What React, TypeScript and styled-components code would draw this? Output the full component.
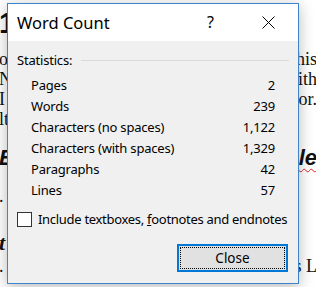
import styled, { createGlobalStyle } from 'styled-components';

const GlobalStyle = createGlobalStyle`
  html, body {
    margin: 0;
    padding: 0;
    background: #ffffff;
    overflow: hidden;
  }
  body {
    width: 316px;
    height: 287px;
  }
`;

type LineKind = 'heading' | 'body' | 'subheading' | 'italic' | 'spacer';

const docLines: { kind: LineKind; h: number; left?: string; right?: string; squiggle?: boolean }[] = [
  { kind: 'heading', h: 36, left: '1' },
  { kind: 'spacer', h: 8 },
  { kind: 'body', h: 20, left: 'ob', right: 'his' },
  { kind: 'body', h: 20, left: 'N', right: 'ith' },
  { kind: 'body', h: 20, left: 'I', right: 'or.' },
  { kind: 'body', h: 20, left: 'lt' },
  { kind: 'spacer', h: 15 },
  { kind: 'subheading', h: 28, left: 'B', right: 'le', squiggle: true },
  { kind: 'spacer', h: 14 },
  { kind: 'body', h: 20, left: '.' },
  { kind: 'spacer', h: 24 },
  { kind: 'italic', h: 26, left: 't' },
  { kind: 'body', h: 20, left: '.', right: 's L' },
];

const stats = [
  { label: 'Pages', value: '2' },
  { label: 'Words', value: '239' },
  { label: 'Characters (no spaces)', value: '1,122' },
  { label: 'Characters (with spaces)', value: '1,329' },
  { label: 'Paragraphs', value: '42' },
  { label: 'Lines', value: '57' },
];

function App() {
  return (
    <>
      <GlobalStyle />
      <Page>
        {docLines.map((line, i) => (
          <DocLine key={i} $kind={line.kind} style={{ height: line.h }}>
            <LeftBit>{line.left}</LeftBit>
            <RightBit $squiggle={line.squiggle}>{line.right}</RightBit>
          </DocLine>
        ))}
      </Page>

      <Dialog>
        <TitleBar>
          <Title>Word Count</Title>
          <TitleButtons>
            <HelpGlyph>?</HelpGlyph>
            <CloseIcon width="13" height="13" viewBox="0 0 13 13">
              <path d="M0.5 0.5 L12.5 12.5 M12.5 0.5 L0.5 12.5" stroke="#000" strokeWidth="1" />
            </CloseIcon>
          </TitleButtons>
        </TitleBar>

        <Body>
          <GroupHeader>
            <span>Statistics:</span>
            <Rule />
          </GroupHeader>

          <StatGrid>
            {stats.map((s) => (
              <StatRow key={s.label}>
                <span>{s.label}</span>
                <span>{s.value}</span>
              </StatRow>
            ))}
          </StatGrid>

          <CheckRow>
            <CheckBox />
            <span>
              Include textboxes, <u>f</u>ootnotes and endnotes
            </span>
          </CheckRow>

          <Footer>
            <CloseButton>Close</CloseButton>
          </Footer>
        </Body>
      </Dialog>
    </>
  );
}

export default App;

const Page = styled.div`
  width: 316px;
  height: 287px;
  padding-top: 5px;
  box-sizing: border-box;
  display: flex;
  flex-direction: column;
  color: #111;
`;

const DocLine = styled.div<{ $kind: LineKind }>`
  display: flex;
  justify-content: space-between;
  align-items: center;
  white-space: nowrap;
  font-family: ${(p) =>
    p.$kind === 'heading' || p.$kind === 'subheading'
      ? '"Liberation Sans", Arial, sans-serif'
      : '"Liberation Serif", "DejaVu Serif", serif'};
  font-size: ${(p) => (p.$kind === 'heading' ? '29px' : p.$kind === 'subheading' ? '22px' : p.$kind === 'italic' ? '22px' : '18px')};
  font-weight: ${(p) => (p.$kind === 'body' ? 400 : 700)};
  font-style: ${(p) => (p.$kind === 'subheading' || p.$kind === 'italic' ? 'italic' : 'normal')};
`;

const LeftBit = styled.span`
  margin-left: -1px;
`;

const RightBit = styled.span<{ $squiggle?: boolean }>`
  margin-right: -1px;
  text-decoration: ${(p) => (p.$squiggle ? 'underline wavy #e02020' : 'none')};
  text-decoration-thickness: 1px;
  text-underline-offset: 3px;
`;

const Dialog = styled.div`
  position: absolute;
  left: 7px;
  top: 3px;
  width: 292px;
  height: 281px;
  box-sizing: border-box;
  border: 1px solid #3f83c9;
  background: #f0f0f0;
  box-shadow: 0 3px 14px rgba(0, 0, 0, 0.28);
  display: flex;
  flex-direction: column;
  font-family: "Noto Sans", "Open Sans", sans-serif;
  color: #000;
`;

const TitleBar = styled.div`
  height: 37px;
  background: #ffffff;
  display: flex;
  align-items: center;
  justify-content: space-between;
  padding-left: 9px;
  padding-right: 23px;
`;

const Title = styled.div`
  font-size: 16.5px;
  margin-top: -1px;
`;

const TitleButtons = styled.div`
  display: flex;
  align-items: center;
  gap: 48px;
`;

const HelpGlyph = styled.span`
  font-size: 16px;
  margin-top: -1px;
`;

const CloseIcon = styled.svg`
  display: block;
`;

const Body = styled.div`
  flex: 1;
  display: flex;
  flex-direction: column;
  padding: 9px 9px 0 9px;
  font-size: 13px;
  letter-spacing: -0.2px;
`;

const GroupHeader = styled.div`
  display: flex;
  align-items: center;
  gap: 9px;
  height: 20px;
`;

const Rule = styled.div`
  flex: 1;
  height: 1px;
  background: #dadada;
`;

const StatGrid = styled.div`
  display: flex;
  flex-direction: column;
  margin-top: 4px;
  padding-left: 14px;
  padding-right: 14px;
`;

const StatRow = styled.div`
  display: flex;
  justify-content: space-between;
  align-items: center;
  height: 21px;
`;

const CheckRow = styled.div`
  display: flex;
  align-items: center;
  gap: 6px;
  margin-top: 8px;
  height: 22px;
  white-space: nowrap;
  letter-spacing: -0.3px;
`;

const CheckBox = styled.div`
  width: 13px;
  height: 13px;
  border: 1px solid #333;
  background: #fff;
  flex-shrink: 0;
`;

const Footer = styled.div`
  display: flex;
  justify-content: flex-end;
  margin-top: 14px;
  padding-right: 1px;
`;

const CloseButton = styled.button`
  position: relative;
  width: 111px;
  height: 28px;
  box-sizing: border-box;
  border: 2px solid #0078d7;
  background: #e1e1e1;
  font-family: "Noto Sans", "Open Sans", sans-serif;
  font-size: 13.5px;
  color: #000;
  padding: 0;
  &::after {
    content: '';
    position: absolute;
    inset: 1px;
    border: 1px dotted #000;
  }
`;
